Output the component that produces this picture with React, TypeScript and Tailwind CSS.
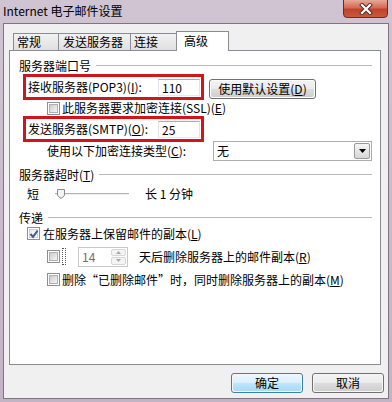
import React from "react";

const U = ({ c }: { c: string }) => (
  <span className="underline underline-offset-[1px] decoration-[1px]">{c}</span>
);

const CheckBox = ({ checked = false }: { checked?: boolean }) => (
  <div className="relative w-[13px] h-[13px] shrink-0 border border-[#8e8f8f] bg-white p-[1px]">
    <div
      className={
        checked
          ? "w-full h-full border border-[#d0d0d0] bg-gradient-to-br from-[#e8e8e8] to-[#ffffff]"
          : "w-full h-full border border-[#b0b0b0] bg-gradient-to-br from-[#cbcbcb] to-[#f6f6f6]"
      }
    />
    {checked && (
      <svg className="absolute left-[1px] top-[1px]" width="10" height="10" viewBox="0 0 10 10">
        <path d="M1.5 5 L4 7.8 L8.6 1.6" fill="none" stroke="#3f5b98" strokeWidth="2" />
      </svg>
    )}
  </div>
);

const GroupHeader = ({ children }: { children: React.ReactNode }) => (
  <div className="flex items-center h-[16px] pl-[9px] pr-[8px]">
    <span className="whitespace-nowrap">{children}</span>
    <div className="flex-1 ml-[5px] h-[2px] border-t border-[#b9b9b9] border-b border-b-white" />
  </div>
);

const WinButton = ({
  children,
  def = false,
  w,
}: {
  children: React.ReactNode;
  def?: boolean;
  w: string;
}) => (
  <div
    className={
      (def ? "border-[#3c7fb1] " : "border-[#707070] ") +
      w +
      " h-[20px] rounded-[3px] border p-[1px] bg-white/40 flex"
    }
  >
    <div
      className={
        (def
          ? "bg-[linear-gradient(to_bottom,#eaf6fd_0%,#d9f0fc_50%,#bee6fd_51%,#a7d9f5_100%)] "
          : "bg-[linear-gradient(to_bottom,#f2f2f2_0%,#ebebeb_50%,#dddddd_51%,#cfcfcf_100%)] ") +
        "flex-1 rounded-[2px] flex items-center justify-center leading-[16px] whitespace-nowrap"
      }
    >
      {children}
    </div>
  </div>
);

const TextBox = ({ value }: { value: string }) => (
  <div className="w-[42px] h-[17px] border border-[#abadb3] border-l-[#e2e3ea] border-r-[#e2e3ea] border-b-[#e3e9ef] bg-white pl-[3px] leading-[15px]">
    {value}
  </div>
);

export default function App() {
  return (
    <div className="w-[392px] h-[402px] overflow-hidden bg-gradient-to-b from-[#d0c3d2] via-[#c9bbcb] to-[#c2b4c5] text-[12px] text-black font-['Noto_Sans_CJK_SC',sans-serif] flex flex-col">
      {/* Title bar */}
      <div className="h-[23px] flex items-start justify-between shrink-0">
        <div className="pl-[3px] pt-[2px] leading-[18px] text-[12px] text-black">Internet 电子邮件设置</div>
        <div className="mr-[4px] -mt-[1px] w-[45px] h-[19px] rounded-b-[4px] border border-[#6b2b22] bg-[linear-gradient(to_bottom,#e8a898_0%,#d46a55_45%,#c0432c_55%,#c75a3c_100%)] flex items-center justify-center">
          <svg width="14" height="12" viewBox="0 0 14 12">
            <path d="M3 2 L11 10 M11 2 L3 10" stroke="#4a2a2a" strokeWidth="4" strokeLinecap="square" />
            <path d="M3 2 L11 10 M11 2 L3 10" stroke="#ffffff" strokeWidth="2.2" strokeLinecap="square" />
          </svg>
        </div>
      </div>

      {/* Client area */}
      <div className="ml-[3px] w-[386px] h-[376px] border border-[#7d7582] bg-[#f0f0f0] flex flex-col">
        {/* Tabs */}
        <div className="mt-[7px] h-[20px] flex items-start pl-[9px]">
          <div className="mt-[2px] w-[46px] h-[18px] border border-[#898c95] bg-gradient-to-b from-[#f2f2f2] to-[#e0e0e0] pl-[3px] leading-[16px]">
            常规
          </div>
          <div className="-ml-[1px] mt-[2px] w-[73px] h-[18px] border border-[#898c95] bg-gradient-to-b from-[#f2f2f2] to-[#e0e0e0] pl-[4px] leading-[16px]">
            发送服务器
          </div>
          <div className="-ml-[1px] mt-[2px] w-[47px] h-[18px] border border-[#898c95] bg-gradient-to-b from-[#f2f2f2] to-[#e0e0e0] pl-[3px] leading-[16px]">
            连接
          </div>
          <div className="relative z-10 -ml-[1px] w-[53px] h-[20px] border border-b-0 border-[#898c95] bg-white pl-[7px] leading-[17px]">
            高级
          </div>
        </div>

        {/* Panel */}
        <div className="-mt-[1px] ml-[5px] w-[372px] h-[315px] border border-[#898c95] bg-white flex flex-col leading-[16px]">
          <div className="mt-[7px]">
            <GroupHeader>服务器端口号</GroupHeader>
          </div>

          {/* POP3 row */}
          <div className="flex items-start">
            <div className="ml-[13px] w-[181px] h-[26px] border-[3px] border-[#d0161c] flex items-center pl-[2px]">
              <span className="w-[130px] whitespace-nowrap">
                接收服务器(POP3)(<U c="I" />):
              </span>
              <TextBox value="110" />
            </div>
            <div className="ml-[5px] mt-[5px]">
              <WinButton w="w-[107px]">
                使用默认设置(<U c="D" />)
              </WinButton>
            </div>
          </div>

          {/* SSL */}
          <div className="h-[16px] flex items-center pl-[37px]">
            <CheckBox />
            <span className="ml-[2px] whitespace-nowrap">
              此服务器要求加密连接(SSL)(<U c="E" />)
            </span>
          </div>

          {/* SMTP */}
          <div className="ml-[13px] w-[181px] h-[26px] border-[3px] border-[#d0161c] flex items-center pl-[2px]">
            <span className="w-[130px] whitespace-nowrap">
              发送服务器(SMTP)(<U c="O" />):
            </span>
            <TextBox value="25" />
          </div>

          {/* Encryption */}
          <div className="-mt-[1px] h-[20px] flex items-center">
            <span className="pl-[37px] w-[203px] whitespace-nowrap">
              使用以下加密连接类型(<U c="C" />):
            </span>
            <div className="w-[159px] h-[20px] border border-[#abadb3] bg-white flex items-center justify-between pl-[3px] pr-[1px]">
              <span>无</span>
              <div className="w-[16px] h-[16px] border border-[#9a9a9a] rounded-[2px] bg-gradient-to-b from-[#f6f6f6] to-[#d6d6d6] flex items-center justify-center">
                <svg width="7" height="4" viewBox="0 0 7 4">
                  <path d="M0 0 L7 0 L3.5 4 Z" fill="#000" />
                </svg>
              </div>
            </div>
          </div>

          <div className="mt-[6px]">
            <GroupHeader>
              服务器超时(<U c="T" />)
            </GroupHeader>
          </div>

          {/* Slider */}
          <div className="mt-[3px] h-[16px] flex items-center pl-[17px]">
            <span>短</span>
            <svg className="ml-[16px]" width="74" height="12" viewBox="0 0 74 12">
              <line x1="0" y1="5.5" x2="74" y2="5.5" stroke="#b4b4b4" />
              <line x1="0" y1="6.5" x2="74" y2="6.5" stroke="#ececec" />
              <path d="M2.5 1.5 L9.5 1.5 L9.5 7.5 L6 10.5 L2.5 7.5 Z" fill="#f4f4f4" stroke="#8a8a8a" />
            </svg>
            <span className="ml-[16px] whitespace-nowrap">长 1 分钟</span>
          </div>

          <div className="mt-[8px]">
            <GroupHeader>传递</GroupHeader>
          </div>

          {/* keep copy */}
          <div className="h-[15px] flex items-center pl-[17px]">
            <CheckBox checked />
            <span className="ml-[3px] whitespace-nowrap">
              在服务器上保留邮件的副本(<U c="L" />)
            </span>
          </div>

          {/* days */}
          <div className="mt-[5px] h-[21px] flex items-center pl-[37px]">
            <CheckBox />
            <div className="ml-[2px] w-[4px] h-[17px] border border-dotted border-[#555]" />
            <div className="ml-[12px] w-[50px] h-[20px] border border-[#c8c8c8] bg-white flex items-center justify-between pl-[3px] pr-[1px] text-[#6d6d6d]">
              <span>14</span>
              <div className="w-[15px] h-[16px] flex flex-col gap-[1px]">
                <div className="flex-1 border border-[#d6d6d6] rounded-[2px] bg-[#f4f4f4] flex items-center justify-center">
                  <svg width="5" height="3" viewBox="0 0 5 3">
                    <path d="M0 3 L5 3 L2.5 0 Z" fill="#a8a8a8" />
                  </svg>
                </div>
                <div className="flex-1 border border-[#d6d6d6] rounded-[2px] bg-[#f4f4f4] flex items-center justify-center">
                  <svg width="5" height="3" viewBox="0 0 5 3">
                    <path d="M0 0 L5 0 L2.5 3 Z" fill="#a8a8a8" />
                  </svg>
                </div>
              </div>
            </div>
            <span className="ml-[11px] whitespace-nowrap">
              天后删除服务器上的邮件副本(<U c="R" />)
            </span>
          </div>

          {/* delete */}
          <div className="mt-[5px] h-[15px] flex items-center pl-[37px]">
            <CheckBox />
            <span className="ml-[2px] whitespace-nowrap">
              删除“已删除邮件”时，同时删除服务器上的副本(<U c="M" />)
            </span>
          </div>
        </div>

        {/* Buttons */}
        <div className="mt-[8px] flex justify-end pr-[4px] gap-[9px]">
          <WinButton def w="w-[72px]">
            确定
          </WinButton>
          <WinButton w="w-[72px]">取消</WinButton>
        </div>
      </div>
    </div>
  );
}
